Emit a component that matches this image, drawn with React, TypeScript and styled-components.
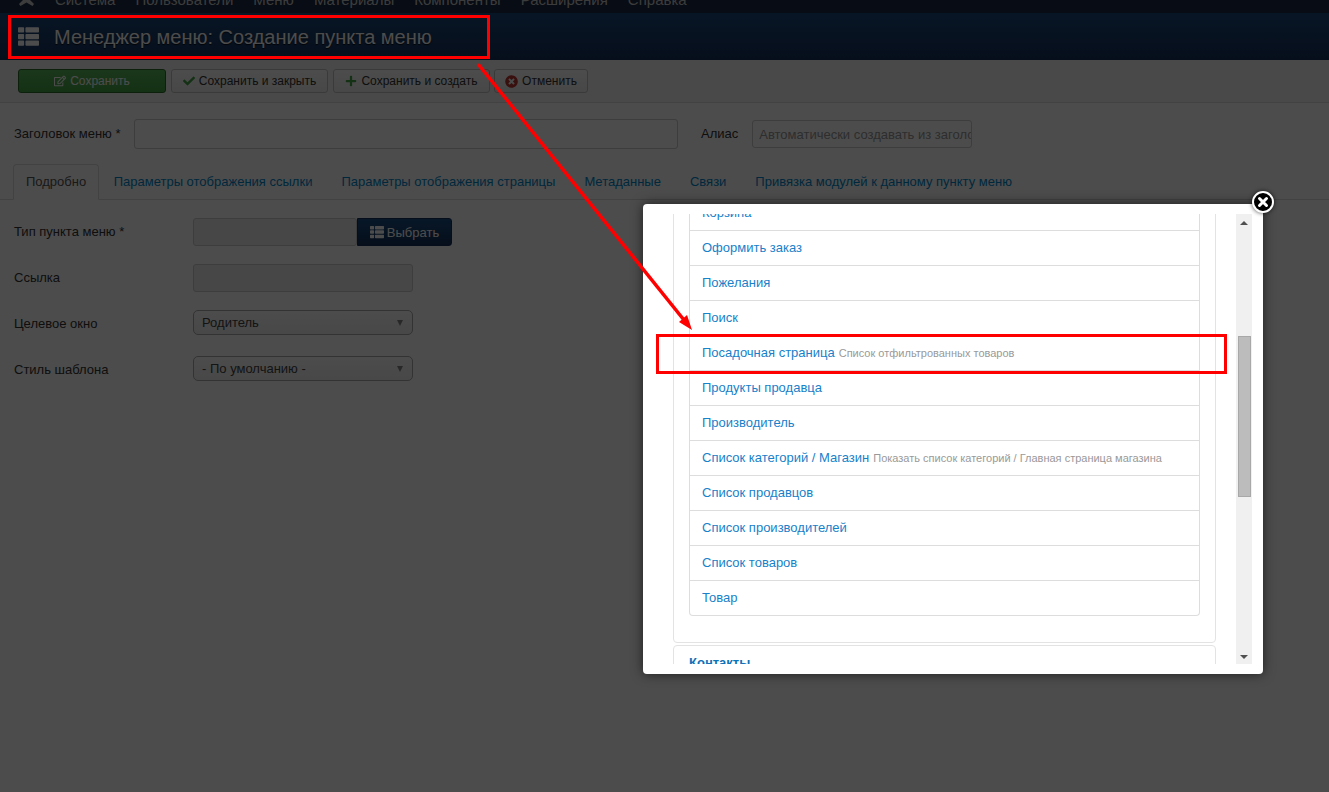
import { FaCheck, FaPlus, FaRegEdit, FaThList, FaTimesCircle } from 'react-icons/fa';
import styled, { createGlobalStyle } from 'styled-components';

const GlobalStyle = createGlobalStyle`
    html, body {
        margin: 0;
        height: 100%;
        background: #fff;
        overflow: hidden;
    }
    body {
        font-family: 'Liberation Sans', Arial, sans-serif;
        font-size: 13px;
        color: #333;
    }
`;

const Page = styled.div`
    position: relative;
    width: 1329px;
    height: 792px;
    overflow: hidden;
`;

const TopNav = styled.nav`
    height: 13px;
    background: #1c2a44;
    display: flex;
    align-items: flex-start;
    gap: 20px;
    padding-left: 18px;
    overflow: hidden;
    color: #c8c8c8;
    font-size: 15px;
    line-height: 16px;
`;

const NavLogo = styled.svg`
    flex: none;
`;

const NavItem = styled.span`
    flex: none;
    position: relative;
    top: -8px;
`;

const Header = styled.header`
    height: 47px;
    background: linear-gradient(#1a4a7c, #17305c);
    display: flex;
    align-items: center;
    padding-left: 18px;
    gap: 15px;
    color: #fff;
`;

const Title = styled.h1`
    margin: 0;
    padding-top: 2px;
    font-size: 20px;
    font-weight: 400;
    text-shadow: 0 1px 1px rgba(0, 0, 0, 0.8);
`;

const Toolbar = styled.div`
    height: 42px;
    background: #f5f5f5;
    border-bottom: 1px solid #dcdcdc;
    display: flex;
    align-items: center;
    gap: 5px;
    padding-left: 18px;
`;

const ToolButton = styled.button<{ $primary?: boolean; $width: number }>`
    width: ${({ $width }) => $width}px;
    height: 24px;
    display: flex;
    align-items: center;
    justify-content: center;
    gap: 4px;
    padding: 0;
    font: 12px 'Liberation Sans', Arial, sans-serif;
    border-radius: 3px;
    border: 1px solid ${({ $primary }) => ($primary ? '#2b6b2b' : '#c4c4c4')};
    background: ${({ $primary }) => ($primary ? 'linear-gradient(#5cb85c, #46a546)' : 'linear-gradient(#fff, #efefef)')};
    color: ${({ $primary }) => ($primary ? '#fff' : '#333')};
    &:last-child {
        margin-left: -1px;
    }
`;

const Form = styled.main`
    padding: 15px 0 0 14px;
`;

const TitleRow = styled.div`
    display: flex;
    align-items: center;
    height: 32px;
`;

const TitleLabel = styled.label`
    width: 120px;
    flex: none;
    padding-bottom: 2px;
`;

const AliasLabel = styled.label`
    margin: 0 14px 0 23px;
    padding-bottom: 2px;
`;

const TextInput = styled.div<{ $width: number; $height?: number; $muted?: boolean }>`
    width: ${({ $width }) => $width}px;
    height: ${({ $height }) => $height ?? 28}px;
    box-sizing: border-box;
    flex: none;
    display: flex;
    align-items: center;
    padding-left: 6px;
    overflow: hidden;
    white-space: nowrap;
    border: 1px solid #ccc;
    border-radius: 3px;
    color: #999;
    background: ${({ $muted }) => ($muted ? '#eee' : '#fff')};
`;

const Tabs = styled.div`
    display: flex;
    align-items: flex-end;
    height: 35px;
    margin: 14px 0 0 -14px;
    padding-left: 13px;
    border-bottom: 1px solid #ddd;
`;

const Tab = styled.div<{ $active?: boolean }>`
    height: 36px;
    box-sizing: border-box;
    margin-bottom: -1px;
    padding: 0 ${({ $active }) => ($active ? '12px' : '13.5px')} 2px;
    display: flex;
    align-items: center;
    color: ${({ $active }) => ($active ? '#555' : '#0088cc')};
    background: ${({ $active }) => ($active ? '#fff' : 'transparent')};
    border: 1px solid ${({ $active }) => ($active ? '#ddd' : 'transparent')};
    border-bottom-color: ${({ $active }) => ($active ? '#fff' : 'transparent')};
    border-radius: 4px 4px 0 0;
`;

const FieldList = styled.div`
    display: flex;
    flex-direction: column;
    gap: 18px;
    margin-top: 18px;
`;

const Field = styled.div<{ $height: number; $gap?: number }>`
    display: flex;
    align-items: center;
    height: ${({ $height }) => $height}px;
    margin-top: ${({ $gap }) => $gap ?? 0}px;
`;

const FieldLabel = styled.label<{ $low?: boolean }>`
    width: 179px;
    flex: none;
    ${({ $low }) => ($low ? 'padding-top: 2px;' : 'padding-bottom: 2px;')}
`;

const SelectButton = styled.button`
    width: 95px;
    height: 28px;
    display: flex;
    align-items: center;
    justify-content: center;
    gap: 3px;
    padding: 0;
    border: 1px solid #14305a;
    border-radius: 0 3px 3px 0;
    background: linear-gradient(#1a4f85, #14305a);
    color: #fff;
    font: 13px 'Liberation Sans', Arial, sans-serif;
`;

const SelectBox = styled.div`
    width: 220px;
    height: 25px;
    box-sizing: border-box;
    display: flex;
    align-items: center;
    justify-content: space-between;
    padding: 0 9px 0 8px;
    border: 1px solid #aaa;
    border-radius: 5px;
    background: linear-gradient(#fff, #f0f0f0);
    color: #444;
`;

const SelectArrow = styled.span`
    width: 0;
    height: 0;
    border-left: 3.5px solid transparent;
    border-right: 3.5px solid transparent;
    border-top: 6px solid #888;
`;

const Overlay = styled.div`
    position: absolute;
    inset: 0;
    background: rgba(0, 0, 0, 0.7);
`;

const Modal = styled.div`
    position: absolute;
    left: 643px;
    top: 204px;
    width: 620px;
    height: 470px;
    box-sizing: border-box;
    padding: 10px 11px 10px 0;
    background: #fff;
    border-radius: 4px;
    box-shadow: 0 0 12px rgba(0, 0, 0, 0.6);
    display: flex;
`;

const ScrollView = styled.div`
    flex: 1;
    height: 450px;
    overflow: hidden;
    padding: 0 20px 0 30px;
`;

const Panel = styled.section`
    margin-top: -40px;
    height: 469px;
    box-sizing: border-box;
    border: 1px solid #e3e3e3;
    border-radius: 4px;
    padding: 21px 15px 0;
`;

const ItemList = styled.ul`
    list-style: none;
    margin: 0;
    padding: 0;
    border: 1px solid #ddd;
    border-top: none;
    border-radius: 0 0 4px 4px;
`;

const Item = styled.li`
    height: 35px;
    box-sizing: border-box;
    display: flex;
    align-items: center;
    gap: 4px;
    padding: 0 0 2px 12px;
    border-bottom: 1px solid #ddd;
    color: #1781c9;
    &:last-child {
        height: 34px;
        border-bottom: none;
    }
`;

const ItemNote = styled.small`
    font-size: 11px;
    color: #999;
    padding-top: 1px;
`;

const NextPanel = styled.section`
    margin-top: 2px;
    height: 60px;
    box-sizing: border-box;
    border: 1px solid #e3e3e3;
    border-radius: 4px;
    padding: 9px 15px;
    color: #1072b8;
    font-weight: 700;
`;

const Scrollbar = styled.div`
    width: 16px;
    height: 450px;
    flex: none;
    position: relative;
    background: #f0f0f0;
`;

const ScrollThumb = styled.div`
    position: absolute;
    left: 2px;
    right: 1px;
    top: 122px;
    height: 161px;
    background: #bcbcbc;
    border: 1px solid #a8a8a8;
    box-sizing: border-box;
`;

const ScrollArrow = styled.span<{ $down?: boolean }>`
    position: absolute;
    left: 4px;
    width: 0;
    height: 0;
    border-left: 4px solid transparent;
    border-right: 4px solid transparent;
    ${({ $down }) => ($down ? 'bottom: 5px; border-top: 4px solid #505050;' : 'top: 7px; border-bottom: 4px solid #505050;')}
`;

const CloseButton = styled.div`
    position: absolute;
    left: 1252px;
    top: 191px;
    width: 22px;
    height: 22px;
    box-sizing: border-box;
    border-radius: 50%;
    background: #000;
    border: 2px solid #fff;
    box-shadow: 0 0 4px rgba(0, 0, 0, 0.7);
    display: flex;
    align-items: center;
    justify-content: center;
`;

const Highlight = styled.div<{ $left: number; $top: number; $width: number; $height: number }>`
    position: absolute;
    left: ${({ $left }) => $left}px;
    top: ${({ $top }) => $top}px;
    width: ${({ $width }) => $width}px;
    height: ${({ $height }) => $height}px;
    box-sizing: border-box;
    border: 3px solid #ff0000;
`;

const ArrowCanvas = styled.svg`
    position: absolute;
    inset: 0;
    pointer-events: none;
`;

const navItems = ['Система', 'Пользователи', 'Меню', 'Материалы', 'Компоненты', 'Расширения', 'Справка'];
const tabs = [
    'Параметры отображения ссылки',
    'Параметры отображения страницы',
    'Метаданные',
    'Связи',
    'Привязка модулей к данному пункту меню',
];
const items: { name: string; note?: string }[] = [
    { name: 'Корзина' },
    { name: 'Оформить заказ' },
    { name: 'Пожелания' },
    { name: 'Поиск' },
    { name: 'Посадочная страница', note: 'Список отфильтрованных товаров' },
    { name: 'Продукты продавца' },
    { name: 'Производитель' },
    { name: 'Список категорий / Магазин', note: 'Показать список категорий / Главная страница магазина' },
    { name: 'Список продавцов' },
    { name: 'Список производителей' },
    { name: 'Список товаров' },
    { name: 'Товар' },
];

function App() {
    return (
        <Page>
            <GlobalStyle />
            <TopNav>
                <NavLogo height="6" viewBox="0 0 17 6" width="17">
                    <path d="M5 0L1 4l1.500 2L8.500 2.500 14.500 6 16 4 12 0z" fill="#c8c8c8" />
                </NavLogo>
                {navItems.map((item) => (
                    <NavItem key={item}>{item}</NavItem>
                ))}
            </TopNav>
            <Header>
                <FaThList color="#fff" size={21} />
                <Title>Менеджер меню: Создание пункта меню</Title>
            </Header>
            <Toolbar>
                <ToolButton $primary $width={148}>
                    <FaRegEdit size={12} /> Сохранить
                </ToolButton>
                <ToolButton $width={157}>
                    <FaCheck color="#46a546" size={12} /> Сохранить и закрыть
                </ToolButton>
                <ToolButton $width={157}>
                    <FaPlus color="#46a546" size={12} /> Сохранить и создать
                </ToolButton>
                <ToolButton $width={94}>
                    <FaTimesCircle color="#bd362f" size={13} /> Отменить
                </ToolButton>
            </Toolbar>
            <Form>
                <TitleRow>
                    <TitleLabel>Заголовок меню *</TitleLabel>
                    <TextInput $height={30} $width={544} />
                    <AliasLabel>Алиас</AliasLabel>
                    <TextInput $width={220}>Автоматически создавать из заголовка</TextInput>
                </TitleRow>
                <Tabs>
                    <Tab $active>Подробно</Tab>
                    {tabs.map((tab) => (
                        <Tab key={tab}>{tab}</Tab>
                    ))}
                </Tabs>
                <FieldList>
                    <Field $height={28}>
                        <FieldLabel>Тип пункта меню *</FieldLabel>
                        <TextInput $muted $width={164} />
                        <SelectButton>
                            <FaThList size={14} /> Выбрать
                        </SelectButton>
                    </Field>
                    <Field $height={28}>
                        <FieldLabel>Ссылка</FieldLabel>
                        <TextInput $muted $width={220} />
                    </Field>
                    <Field $height={25}>
                        <FieldLabel $low>Целевое окно</FieldLabel>
                        <SelectBox>
                            Родитель
                            <SelectArrow />
                        </SelectBox>
                    </Field>
                    <Field $gap={3} $height={25}>
                        <FieldLabel $low>Стиль шаблона</FieldLabel>
                        <SelectBox>
                            - По умолчанию -
                            <SelectArrow />
                        </SelectBox>
                    </Field>
                </FieldList>
            </Form>
            <Overlay />
            <Modal>
                <ScrollView>
                    <Panel>
                        <ItemList>
                            {items.map((item) => (
                                <Item key={item.name}>
                                    {item.name}
                                    {item.note && <ItemNote>{item.note}</ItemNote>}
                                </Item>
                            ))}
                        </ItemList>
                    </Panel>
                    <NextPanel>Контакты</NextPanel>
                </ScrollView>
                <Scrollbar>
                    <ScrollArrow />
                    <ScrollThumb />
                    <ScrollArrow $down />
                </Scrollbar>
            </Modal>
            <CloseButton>
                <svg height="12" viewBox="0 0 12 12" width="12">
                    <path d="M2.500 2.500l7 7M9.500 2.500l-7 7" stroke="#fff" strokeLinecap="round" strokeWidth="3" />
                </svg>
            </CloseButton>
            <Highlight $height={44} $left={8} $top={15} $width={482} />
            <Highlight $height={40} $left={656} $top={334} $width={571} />
            <ArrowCanvas height="792" width="1329">
                <path d="M478 64L688 325" fill="none" stroke="#ff0000" strokeWidth="3.5" />
                <path d="M692 330L679 322L687 315Z" fill="#ff0000" />
            </ArrowCanvas>
        </Page>
    );
}

export default App;
